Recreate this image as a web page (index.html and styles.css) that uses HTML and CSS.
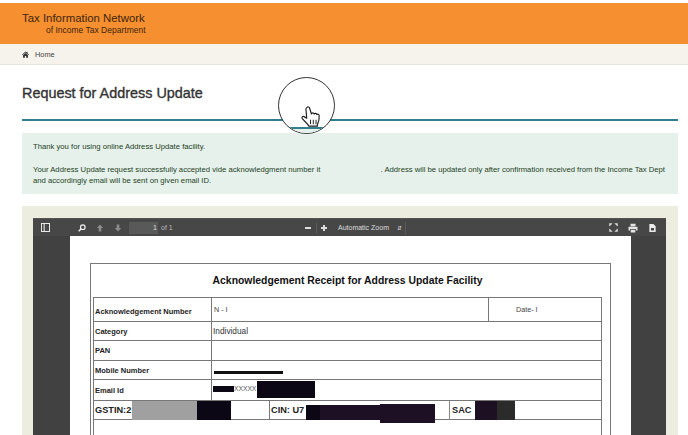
FILE: index.html
```html
<!DOCTYPE html>
<html lang="en">
<head>
<meta charset="utf-8">
<title>Request for Address Update</title>
<link rel="stylesheet" href="styles.css">
</head>
<body>
<header class="brand">
  <div class="brand-name">Tax Information Network</div>
  <div class="brand-sub">of Income Tax Department</div>
</header>
<nav class="crumbs">
  <svg class="home-icon" viewBox="0 0 10 10" width="7" height="7"><path d="M5 .8 0 5.2l.6.7L5 2.1l4.4 3.8.6-.7-2-1.8V1H7.4v1L5 .8zM1.5 6v3.6h2.6V7h1.8v2.6h2.6V6L5 3 1.5 6z" fill="#333"/></svg>
  <span>Home</span>
</nav>
<main class="content">
  <h1 class="title">Request for Address Update</h1>
  <div class="alert">
    <p class="alert-first">Thank you for using online Address Update facility.</p>
    <p class="alert-row"><span>Your Address Update request successfully accepted vide acknowledgment number it</span><span>. Address will be updated only after confirmation received from the Income Tax Dept</span></p>
    <p>and accordingly email will be sent on given email ID.</p>
  </div>
  <section class="panel">
    <div class="viewer">
      <div class="toolbar">
        <div class="tool-left">
          <svg class="tool-icon sidebar-icon" viewBox="0 0 10 10" width="9" height="9"><path d="M.5.5h9v9h-9zM3.5.5v9" fill="none" stroke="#e8e8e8" stroke-width="1.2"/></svg>
          <svg class="tool-icon search-icon" viewBox="0 0 10 10" width="8" height="8"><circle cx="6" cy="4" r="2.9" fill="none" stroke="#eee" stroke-width="1.5"/><path d="M4 6 .9 9.2" stroke="#eee" stroke-width="1.8"/></svg>
          <svg class="tool-icon arrow-icon" viewBox="0 0 10 10" width="8" height="8"><path d="M5 .5 9 5H6.6v4.5H3.4V5H1z" fill="#8c8c8c"/></svg>
          <svg class="tool-icon arrow-icon" viewBox="0 0 10 10" width="8" height="8"><path d="M5 9.5 9 5H6.6V.5H3.4V5H1z" fill="#8c8c8c"/></svg>
          <span class="page-input">1</span>
          <span class="page-of">of 1</span>
        </div>
        <div class="tool-mid">
          <span class="zoom-btn minus"></span>
          <span class="zoom-sep"></span>
          <span class="zoom-btn plus"></span>
          <span class="zoom-select">Automatic Zoom<span class="zoom-caret">&#8693;</span></span>
        </div>
        <div class="tool-right">
          <svg class="tool-icon" viewBox="0 0 10 10" width="9" height="9"><path d="M.5 3.5V.5h3L.5 3.5zM9.5 3.5V.5h-3l3 3zM.5 6.5v3h3l-3-3zM9.5 6.5v3h-3l3-3z" fill="#e0e0e0" stroke="#e0e0e0" stroke-width=".5"/></svg>
          <svg class="tool-icon" viewBox="0 0 10 10" width="10" height="10"><path d="M2.500.8h5v2.400h-5zM.5 3.800h9v3.700H8V6H2v1.500H.5zM2.700 6.800h4.600v2.600H2.700z" fill="#e4e4e4"/></svg>
          <svg class="tool-icon" viewBox="0 0 10 10" width="9" height="10"><path d="M1.500.5h4.500l2.500 2.500v6.500h-7zM3.300 5v2.800h3.400V5z" fill="#ededed" fill-rule="evenodd"/></svg>
        </div>
      </div>
      <div class="viewer-body">
        <article class="sheet">
          <div class="receipt">
            <h2 class="receipt-title">Acknowledgement Receipt for Address Update Facility</h2>
            <div class="grid">
              <div class="row row-ack">
                <div class="cell label">Acknowledgement Number</div>
                <div class="cell value value-mid">N - I</div>
                <div class="cell date">Date- I</div>
              </div>
              <div class="row row-cat">
                <div class="cell label">Category</div>
                <div class="cell value value-wide"><span class="individual">Individual</span></div>
              </div>
              <div class="row row-pan">
                <div class="cell label">PAN</div>
                <div class="cell value value-wide"></div>
              </div>
              <div class="row row-mob">
                <div class="cell label">Mobile Number</div>
                <div class="cell value value-wide"><span class="mobile-bar"></span></div>
              </div>
              <div class="row row-email">
                <div class="cell label">Email Id</div>
                <div class="cell value value-wide email">
                  <span class="mask mask-a"></span><span class="xs">XXXXX</span><span class="mask mask-b"></span>
                </div>
              </div>
              <div class="row row-tax">
                <div class="tax tax-gstin">
                  <b>GSTIN:2</b><span class="mask-g"></span><span class="mask-h"></span>
                </div>
                <div class="tax tax-cin">
                  <b>CIN: U7</b><span class="mask-c"></span><span class="mask-d"></span><span class="mask-e"></span>
                </div>
                <div class="tax tax-sac">
                  <b>SAC</b><span class="mask-s1"></span><span class="mask-s2"></span>
                </div>
              </div>
              <div class="row-rest"></div>
            </div>
          </div>
        </article>
      </div>
    </div>
  </section>
</main>
<div class="lens">
  <span class="lens-line"></span>
  <svg class="hand" viewBox="0 0 24 26" width="22" height="24">
    <path d="M7.500 2.500c1.200-1 2.600-.4 3 .9l2 6.300c.2-1.500 2.500-1.500 3 .1.500-1.200 2.500-1 2.900.5.700-.8 2.400-.3 2.500 1.200.2 3-.3 6-1.500 8.500-.4.900-.5 2-.5 3H9.500c-.3-1.500-1.500-2.500-3-4l-4-4.200c-1-1.200.4-3 2-2.200l2.800 1.700L6.500 4.500c-.2-.8.300-1.500 1-2z" fill="#fff" stroke="#222" stroke-width="1.300" stroke-linejoin="round"/>
    <path d="M11.500 16v5M14.500 16v5M17.500 16v5" stroke="#222" stroke-width="1.100"/>
  </svg>
</div>
</body>
</html>
```

FILE: styles.css
```css
* { box-sizing: border-box; }
html, body { margin: 0; padding: 0; }
body {
  width: 688px;
  height: 435px;
  overflow: hidden;
  position: relative;
  background: #fff;
  font-family: "Liberation Sans", Arial, sans-serif;
  color: #333;
  padding-top: 3px;
}
.brand {
  height: 41px;
  background: #f68f30;
  padding: 9px 0 0 22px;
  color: #40250f;
}
.brand-name { font-size: 11.4px; line-height: 13px; }
.brand-sub { font-size: 8.5px; line-height: 10px; padding-left: 24px; }
.crumbs {
  height: 21px;
  background: #f6f3ec;
  border-bottom: 1px solid #e6e4de;
  display: flex;
  align-items: center;
  padding-left: 22px;
  gap: 6px;
  font-size: 7.4px;
  color: #444;
}
.content { padding: 0 10px 0 22px; }
.title {
  margin: 0;
  height: 56px;
  padding-top: 20px;
  border-bottom: 2px solid #2f7f90;
  font-size: 14.4px;
  line-height: 17px;
  font-weight: 400;
  -webkit-text-stroke: .35px #333;
  color: #333;
}
.alert {
  margin-top: 12px;
  height: 61px;
  background: #e5f1ea;
  padding: 8px 13px 0 11px;
  font-size: 7.7px;
  line-height: 11.5px;
  color: #1f3f25;
}
.alert p { margin: 0; }
.alert-first { margin-bottom: 11px !important; }
.alert-row { display: flex; justify-content: space-between; white-space: nowrap; }
.panel {
  margin-top: 12px;
  height: 229px;
  background: #ecedde;
  padding: 12px 12px 0 11px;
}
.viewer { height: 217px; background: #414141; }
.toolbar {
  height: 18px;
  background: #474747;
  border-top: 1px solid #555;
  display: flex;
  align-items: center;
  position: relative;
  color: #ddd;
  font-size: 7px;
}
.tool-left { display: flex; align-items: center; padding-left: 8px; width: 271px; flex: none; }
.tool-icon { display: block; flex: none; }
.search-icon { margin-left: 28px; }
.arrow-icon { margin-left: 10px; }
.page-input {
  margin-left: 7px;
  width: 29px;
  height: 12px;
  background: #595959;
  text-align: right;
  padding-right: 1px;
  line-height: 12px;
}
.page-of { margin-left: 3px; color: #bbb; }
.tool-mid { display: flex; align-items: center; }
.zoom-btn { display: block; position: relative; width: 8px; height: 8px; }
.minus::before, .plus::before {
  content: "";
  position: absolute;
  left: 1px; right: 1px; top: 3px; height: 2px;
  background: #ddd;
}
.plus::after {
  content: "";
  position: absolute;
  top: 1px; bottom: 1px; left: 3px; width: 2px;
  background: #ddd;
}
.zoom-sep { width: 1px; height: 10px; background: #5c5c5c; margin: 0 3px 0 4px; }
.zoom-select {
  margin-left: 10px;
  display: flex;
  align-items: center;
  white-space: nowrap;
  border-right: 1px solid #5c5c5c;
  height: 12px;
  padding-right: 3px;
}
.zoom-caret { margin-left: 8px; font-size: 6px; }
.tool-right { margin-left: auto; display: flex; align-items: center; gap: 10px; padding-right: 9px; }
.viewer-body { padding-left: 37px; height: 199px; }
.sheet { width: 561px; height: 199px; background: #fff; padding: 27px 20px 0 20px; }
.receipt {
  width: 521px;
  height: 172px;
  border: solid #777;
  border-width: 1px 1px 0 1px;
  padding: 0 8px 0 2px;
}
.receipt-title {
  margin: 0;
  height: 33px;
  padding-top: 10px;
  text-align: center;
  font-size: 10.4px;
  line-height: 14px;
  color: #111;
}
.grid {
  border: solid #777;
  border-width: 1px 1px 0 1px;
  height: 139px;
  display: flex;
  flex-direction: column;
}
.row { display: flex; border-bottom: 1px solid #777; flex: none; }
.row-ack { height: 24px; }
.row-cat { height: 19px; }
.row-pan { height: 20px; }
.row-mob { height: 19px; }
.row-email { height: 21px; }
.row-tax { height: 19px; }
.row-rest { flex: 1; }
.cell { display: flex; align-items: center; }
.label {
  width: 118px;
  flex: none;
  border-right: 1px solid #777;
  padding: 1px 0 0 1px;
  font-size: 7.5px;
  font-weight: 700;
  color: #222;
}
.row-ack .label { padding-top: 3px; }
.row-pan .label { padding-top: 0; padding-bottom: 1px; }
.value { font-size: 7.2px; color: #444; padding-left: 2px; }
.value-mid { width: 277px; flex: none; border-right: 1px solid #777; padding-bottom: 1px; }
.value-wide { flex: 1; }
.date { flex: 1; font-size: 7.2px; color: #444; padding-left: 27px; padding-bottom: 1px; }
.individual { font-size: 8.3px; color: #333; margin-top: 0; margin-left: -1px; }
.mobile-bar { display: block; width: 69px; height: 3px; background: #111; margin-top: 5px; }
.email { padding-left: 1px; align-items: flex-start; }
.email .mask-a { display: block; width: 21px; height: 6px; margin-top: 6px; background: #0b0714; }
.xs { font-size: 6.7px; line-height: 18px; color: #555; width: 23px; overflow: hidden; }
.email .mask-b { display: block; width: 58px; height: 17px; margin-top: 1px; background: #0b0714; }
.tax { display: flex; align-items: flex-start; height: 19px; flex: none; }
.tax b { font-size: 9.2px; line-height: 18px; color: #222; white-space: nowrap; }
.tax-gstin { width: 176px; border-right: 1px solid #777; padding-left: 1px; }
.tax-gstin b { width: 37px; overflow: hidden; }
.mask-g { width: 65px; height: 19px; background: #a0a0a0; flex: none; }
.mask-h { width: 34px; height: 19px; background: #0c0715; flex: none; }
.tax-cin { width: 180px; border-right: 1px solid #888; padding-left: 1px; }
.tax-cin b { width: 35px; overflow: hidden; }
.mask-c { width: 14px; height: 15px; margin-top: 4px; background: #0c0715; flex: none; }
.mask-d { width: 60px; height: 15px; margin-top: 4px; background: #1e1024; flex: none; }
.mask-e { width: 55px; height: 19px; margin-top: 3px; background: #1e1024; flex: none; }
.tax-sac { flex: 1; padding-left: 2px; }
.tax-sac b { width: 23px; }
.mask-s1 { width: 22px; height: 19px; background: #1d1022; flex: none; }
.mask-s2 { width: 18px; height: 19px; background: #2b2b2b; flex: none; }
.lens {
  position: absolute;
  left: 278px;
  top: 77px;
  width: 57px;
  height: 57px;
  border: 1px solid #333;
  border-radius: 50%;
  background: #fff;
  overflow: hidden;
}
.lens-line {
  position: absolute;
  left: 0; right: 0;
  top: 49px;
  height: 2px;
  background: #2f7f90;
}
.lens-line::after {
  content: "";
  position: absolute;
  left: 0; right: 0; top: 2px;
  height: 8px;
  background: #e5f1ea;
}
.hand { position: absolute; left: 21px; top: 27px; }
```
